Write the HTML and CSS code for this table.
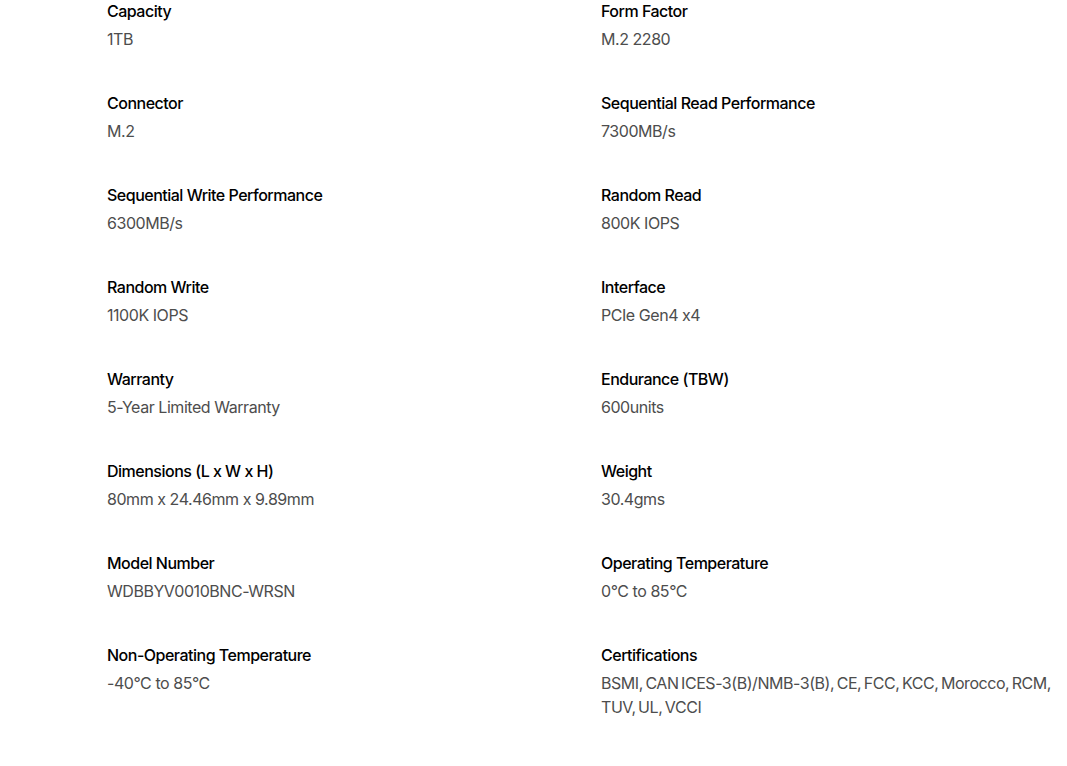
FILE: index.html
```html
<!DOCTYPE html>
<html lang="en">
<head>
<meta charset="utf-8">
<title>Specifications</title>
<link rel="stylesheet" href="styles.css">
</head>
<body>
<section class="specs">
  <div class="spec"><div class="label">Capacity</div><div class="value">1TB</div></div>
  <div class="spec"><div class="label">Form Factor</div><div class="value">M.2 2280</div></div>
  <div class="spec"><div class="label">Connector</div><div class="value">M.2</div></div>
  <div class="spec"><div class="label">Sequential Read Performance</div><div class="value">7300MB/s</div></div>
  <div class="spec"><div class="label">Sequential Write Performance</div><div class="value">6300MB/s</div></div>
  <div class="spec"><div class="label">Random Read</div><div class="value">800K IOPS</div></div>
  <div class="spec"><div class="label">Random Write</div><div class="value">1100K IOPS</div></div>
  <div class="spec"><div class="label">Interface</div><div class="value">PCIe Gen4 x4</div></div>
  <div class="spec"><div class="label">Warranty</div><div class="value">5-Year Limited Warranty</div></div>
  <div class="spec"><div class="label">Endurance (TBW)</div><div class="value">600units</div></div>
  <div class="spec"><div class="label">Dimensions (L x W x H)</div><div class="value">80mm x 24.46mm x 9.89mm</div></div>
  <div class="spec"><div class="label">Weight</div><div class="value">30.4gms</div></div>
  <div class="spec"><div class="label">Model Number</div><div class="value">WDBBYV0010BNC-WRSN</div></div>
  <div class="spec"><div class="label">Operating Temperature</div><div class="value">0°C to 85°C</div></div>
  <div class="spec"><div class="label">Non-Operating Temperature</div><div class="value">-40°C to 85°C</div></div>
  <div class="spec"><div class="label">Certifications</div><div class="value certs">BSMI, CAN ICES-3(B)/NMB-3(B), CE, FCC, KCC, Morocco, RCM, TUV, UL, VCCI</div></div>
</section>
</body>
</html>
```
FILE: styles.css
```css
html, body {
  margin: 0;
  padding: 0;
  background: #ffffff;
}
body {
  font-family: Inter, "Noto Sans", sans-serif;
  overflow: hidden;
}
.specs {
  display: grid;
  grid-template-columns: 460px 460px;
  column-gap: 34px;
  row-gap: 41px;
  padding: 0 0 0 107px;
}
.spec {
  display: flex;
  flex-direction: column;
  gap: 5px;
}
.label {
  font-size: 16px;
  line-height: 22px;
  font-weight: 500;
  color: #000000;
  letter-spacing: -0.5px;
}
.value {
  font-size: 16px;
  line-height: 24px;
  font-weight: 400;
  color: #4d4d4d;
  letter-spacing: -0.45px;
}
.certs {
  word-spacing: -1.5px;
}
```
